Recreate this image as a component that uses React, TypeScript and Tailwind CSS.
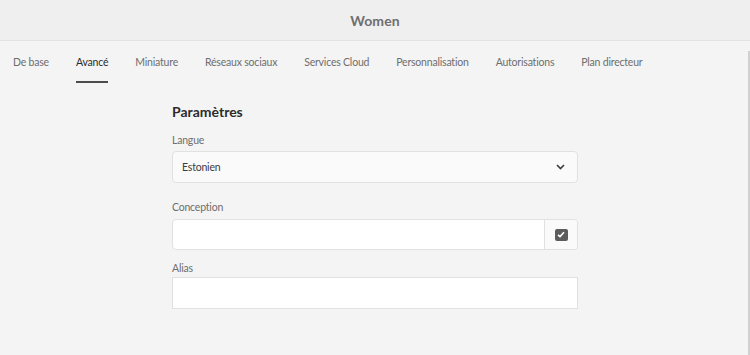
import React from "react";

const tabs = [
  "De base",
  "Avancé",
  "Miniature",
  "Réseaux sociaux",
  "Services Cloud",
  "Personnalisation",
  "Autorisations",
  "Plan directeur",
];

export default function App() {
  return (
    <div
      className="w-[750px] min-h-[355px] bg-[#f4f4f4] text-[#4b4b4b]"
      style={{ fontFamily: "Lato, 'Open Sans', sans-serif" }}
    >
      <header className="h-[41px] bg-[#efefef] border-b border-[#e2e2e2] flex items-center justify-center">
        <span className="text-[14px] font-bold text-[#6e6e6e] tracking-[0.1px]">Women</span>
      </header>
      <div className="relative">
        <nav className="flex gap-[27px] pl-[13px] h-[42px]">
          {tabs.map((t, i) => (
            <div key={t} className="relative flex items-center h-full">
              <span
                className={
                  "pt-[2px] text-[10.5px] tracking-[-0.2px] " +
                  (i === 1 ? "text-[#2c2c2c]" : "text-[#6e6e6e]")
                }
              >
                {t}
              </span>
              {i === 1 && (
                <div className="absolute left-0 right-0 bottom-0 h-[2px] bg-[#4b4b4b]" />
              )}
            </div>
          ))}
        </nav>
        <div className="absolute right-0 top-[10px] w-[2px] h-[400px] bg-[#d0d0d0]" />
        <main className="pl-[172px] pt-[19px]">
          <div className="w-[406px] flex flex-col">
            <h2 className="text-[14px] leading-[20px] font-bold text-[#2c2c2c]">Paramètres</h2>
            <label className="mt-[10px] text-[10.5px] tracking-[-0.2px] leading-[16px] text-[#6e6e6e]">
              Langue
            </label>
            <div className="mt-[3px] h-[32px] rounded-[4px] border border-[#e1e1e1] bg-[#fafafa] flex items-center justify-between pl-[9px] pr-[12px]">
              <span className="pt-[1px] text-[10.5px] tracking-[-0.2px] text-[#3c3c3c]">Estonien</span>
              <svg width="9" height="6" viewBox="0 0 9 6">
                <path d="M1 1 L4.5 4.5 L8 1" fill="none" stroke="#3c3c3c" strokeWidth="1.6" />
              </svg>
            </div>
            <label className="mt-[16px] text-[10.5px] tracking-[-0.2px] leading-[16px] text-[#6e6e6e]">
              Conception
            </label>
            <div className="mt-[4px] h-[31px] rounded-[4px] border border-[#e1e1e1] bg-white flex">
              <div className="flex-1" />
              <div className="w-[33px] border-l border-[#e1e1e1] bg-[#fafafa] rounded-r-[4px] flex items-center justify-center">
                <div className="w-[13px] h-[12px] rounded-[2px] bg-[#5c5c5c] flex items-center justify-center">
                  <svg width="8" height="7" viewBox="0 0 8 7">
                    <path d="M1 3.8 L3 5.6 L7 1.2" fill="none" stroke="#ffffff" strokeWidth="1.6" />
                  </svg>
                </div>
              </div>
            </div>
            <label className="mt-[10px] text-[10.5px] tracking-[-0.2px] leading-[16px] text-[#6e6e6e]">
              Alias
            </label>
            <div className="mt-[1px] h-[32px] border border-[#e1e1e1] bg-white" />
            <h2 className="mt-[43px] ml-[-15px] text-[14px] leading-[20px] font-bold text-[#2c2c2c]">
              Paramètres de la miniature
            </h2>
          </div>
        </main>
      </div>
    </div>
  );
}
